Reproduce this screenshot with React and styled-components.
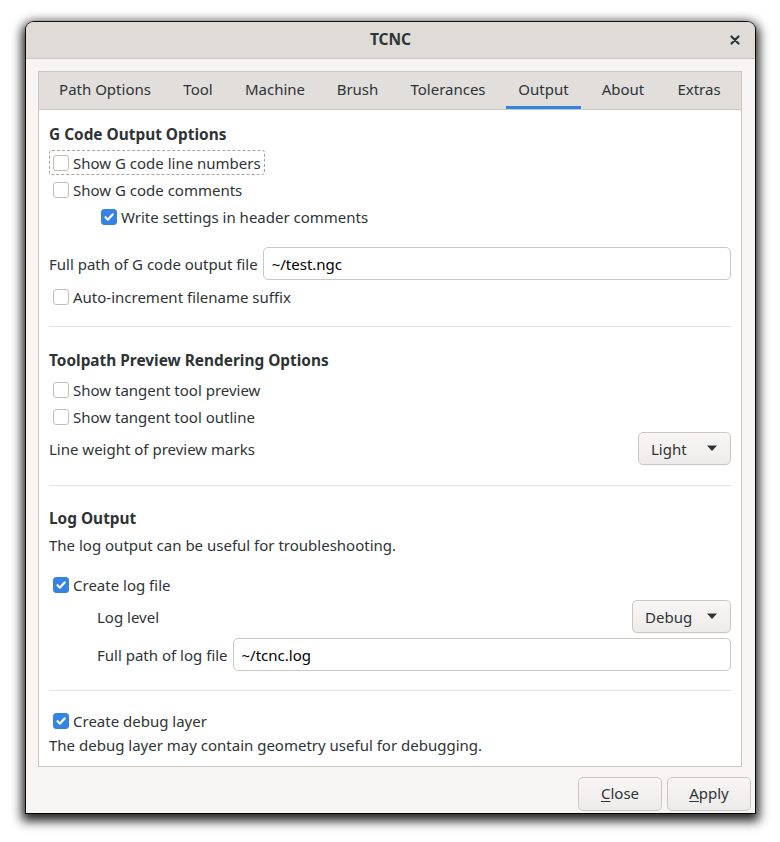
import styled, { createGlobalStyle } from 'styled-components';

const GlobalStyle = createGlobalStyle`
  html, body {
    margin: 0;
    padding: 0;
    background: #ffffff;
  }
  body {
    font-family: "Noto Sans", "DejaVu Sans", sans-serif;
    font-size: 15px;
    color: #2e3436;
  }
`;

const Desktop = styled.div`
  padding: 22px 0 0 26px;
  width: 780px;
  height: 842px;
  box-sizing: border-box;
`;

const Window = styled.div`
  width: 729px;
  display: flex;
  flex-direction: column;
  background: #f6f5f4;
  border-radius: 8px 8px 0 0;
  box-shadow: 0 0 0 1px rgba(0, 0, 0, 0.9), 0 4px 11px 4px rgba(0, 0, 0, 0.88);
`;

const TitleBar = styled.div`
  height: 37px;
  box-sizing: border-box;
  padding-bottom: 3px;
  position: relative;
  display: flex;
  align-items: center;
  justify-content: center;
  background: #dfdcd8;
  border-bottom: 1px solid #cbc6c1;
  border-radius: 8px 8px 0 0;
`;

const Title = styled.span`
  font-weight: 700;
  font-size: 15.5px;
  color: #2e3436;
`;

const CloseX = styled.button`
  position: absolute;
  right: 12px;
  top: 10px;
  width: 16px;
  height: 16px;
  padding: 0;
  border: 0;
  background: none;
  display: flex;
  align-items: center;
  justify-content: center;
`;

const Body = styled.div`
  padding: 12px 13px 0 12px;
`;

const Notebook = styled.div`
  border: 1px solid #cdc7c2;
  background: #ffffff;
`;

const TabBar = styled.div`
  height: 37px;
  display: flex;
  padding-left: 4px;
  background: #e1dedb;
  border-bottom: 1px solid #cdc7c2;
`;

const Tab = styled.div`
  width: ${(p) => p.$w}px;
  margin: 0 4px;
  padding-bottom: 4px;
  display: flex;
  align-items: center;
  justify-content: center;
  box-sizing: border-box;
  color: #2e3436;
  box-shadow: ${(p) => (p.$active ? 'inset 0 -3px 0 #3584e4' : 'none')};
`;

const Page = styled.div`
  padding: 13px 10px 11px 10px;
  display: flex;
  flex-direction: column;
`;

const Heading = styled.div`
  height: 20px;
  line-height: 24px;
  font-weight: 700;
  font-size: 15.4px;
  margin-top: ${(p) => p.$mt || 0}px;
`;

const Text = styled.div`
  height: 20px;
  line-height: 20px;
  margin-top: ${(p) => p.$mt || 0}px;
`;

const Separator = styled.div`
  height: 1px;
  background: #e4e1de;
  margin-top: ${(p) => p.$mt || 0}px;
`;

const CheckRow = styled.label`
  height: 27px;
  display: flex;
  align-items: center;
  margin-top: ${(p) => p.$mt || 0}px;
  padding-left: ${(p) => (p.$indent ? 48 : 0)}px;
`;

const CheckInner = styled.span`
  display: inline-flex;
  align-items: center;
  gap: 4px;
  height: 23px;
  padding: 0 3px 0 3px;
  border: 1px dashed ${(p) => (p.$focus ? '#a9a4a0' : 'transparent')};
  border-radius: 3px;
`;

const Box = styled.span`
  width: 16px;
  height: 16px;
  box-sizing: border-box;
  border-radius: 3px;
  display: inline-flex;
  align-items: center;
  justify-content: center;
  border: 1px solid ${(p) => (p.$checked ? '#3584e4' : '#c3bdb7')};
  background: ${(p) => (p.$checked ? '#3584e4' : '#ffffff')};
`;

const FieldRow = styled.div`
  height: 33px;
  display: flex;
  align-items: center;
  gap: 5px;
  margin-top: ${(p) => p.$mt || 0}px;
  padding-left: ${(p) => (p.$indent ? 48 : 0)}px;
`;

const Label = styled.span`
  flex: ${(p) => (p.$grow ? 1 : 'none')};
  white-space: nowrap;
`;

const Entry = styled.div`
  flex: 1;
  height: 33px;
  box-sizing: border-box;
  display: flex;
  align-items: center;
  padding: 0 8px;
  border: 1px solid #cdc7c2;
  border-radius: 5px;
  background: #ffffff;
  color: #000000;
`;

const Combo = styled.div`
  width: ${(p) => p.$w}px;
  height: 33px;
  box-sizing: border-box;
  display: flex;
  align-items: center;
  justify-content: space-between;
  padding: 0 12px;
  border: 1px solid #cdc7c2;
  border-radius: 5px;
  background: linear-gradient(#f8f7f6, #edebe9);
  box-shadow: 0 1px 0 rgba(0, 0, 0, 0.04);
`;

const ActionArea = styled.div`
  display: flex;
  justify-content: flex-end;
  gap: 5px;
  padding: 10px 4px 2px 0;
`;

const Button = styled.button`
  width: 84px;
  height: 34px;
  box-sizing: border-box;
  padding: 0 0 3px;
  font-family: inherit;
  font-size: 15px;
  color: #2e3436;
  border: 1px solid #cdc7c2;
  border-radius: 5px;
  background: linear-gradient(#f8f7f6, #edebe9);
  u {
    text-decoration-thickness: 1px;
    text-underline-offset: 2px;
  }
`;

const tabs = [
  ['Path Options', 116],
  ['Tool', 54],
  ['Machine', 84],
  ['Brush', 65],
  ['Tolerances', 100],
  ['Output', 75],
  ['About', 68],
  ['Extras', 68],
];

const Check = ({ checked, focus, indent, mt, children }) => (
  <CheckRow $indent={indent} $mt={mt}>
    <CheckInner $focus={focus}>
      <Box $checked={checked}>
        {checked && (
          <svg width="12" height="12" viewBox="0 0 12 12">
            <path d="M2.5 6.2 L5 8.6 L9.6 3.4" fill="none" stroke="#fff" strokeWidth="2.2" strokeLinecap="round" strokeLinejoin="round" />
          </svg>
        )}
      </Box>
      {children}
    </CheckInner>
  </CheckRow>
);

const Arrow = () => (
  <svg width="12" height="7" viewBox="0 0 12 7">
    <path d="M1 0.5 H11 L6 6 Z" fill="#2e3436" />
  </svg>
);

export default function App() {
  return (
    <Desktop>
      <GlobalStyle />
      <Window>
        <TitleBar>
          <Title>TCNC</Title>
          <CloseX aria-label="Close">
            <svg width="10" height="10" viewBox="0 0 10 10">
              <path d="M1.5 1.5 L8.5 8.5 M8.5 1.5 L1.5 8.5" stroke="#2e3436" strokeWidth="2.2" strokeLinecap="round" />
            </svg>
          </CloseX>
        </TitleBar>
        <Body>
          <Notebook>
            <TabBar>
              {tabs.map(([name, w]) => (
                <Tab key={name} $w={w} $active={name === 'Output'}>
                  {name}
                </Tab>
              ))}
            </TabBar>
            <Page>
              <Heading>G Code Output Options</Heading>
              <Check mt={6} focus>Show G code line numbers</Check>
              <Check>Show G code comments</Check>
              <Check indent checked>Write settings in header comments</Check>
              <FieldRow $mt={17}>
                <Label>Full path of G code output file</Label>
                <Entry>~/test.ngc</Entry>
              </FieldRow>
              <Check mt={3}>Auto-increment filename suffix</Check>
              <Separator $mt={16} />

              <Heading $mt={22}>Toolpath Preview Rendering Options</Heading>
              <Check mt={7}>Show tangent tool preview</Check>
              <Check>Show tangent tool outline</Check>
              <FieldRow $mt={2}>
                <Label $grow>Line weight of preview marks</Label>
                <Combo $w={93}>
                  Light <Arrow />
                </Combo>
              </FieldRow>
              <Separator $mt={20} />

              <Heading $mt={21}>Log Output</Heading>
              <Text $mt={8}>The log output can be useful for troubleshooting.</Text>
              <Check mt={16} checked>Create log file</Check>
              <FieldRow $mt={2} $indent>
                <Label $grow>Log level</Label>
                <Combo $w={99}>
                  Debug <Arrow />
                </Combo>
              </FieldRow>
              <FieldRow $mt={5} $indent>
                <Label>Full path of log file</Label>
                <Entry>~/tcnc.log</Entry>
              </FieldRow>
              <Separator $mt={19} />

              <Check mt={16} checked>Create debug layer</Check>
              <Text $mt={1}>The debug layer may contain geometry useful for debugging.</Text>
            </Page>
          </Notebook>
        </Body>
        <ActionArea>
          <Button><u>C</u>lose</Button>
          <Button><u>A</u>pply</Button>
        </ActionArea>
      </Window>
    </Desktop>
  );
}
